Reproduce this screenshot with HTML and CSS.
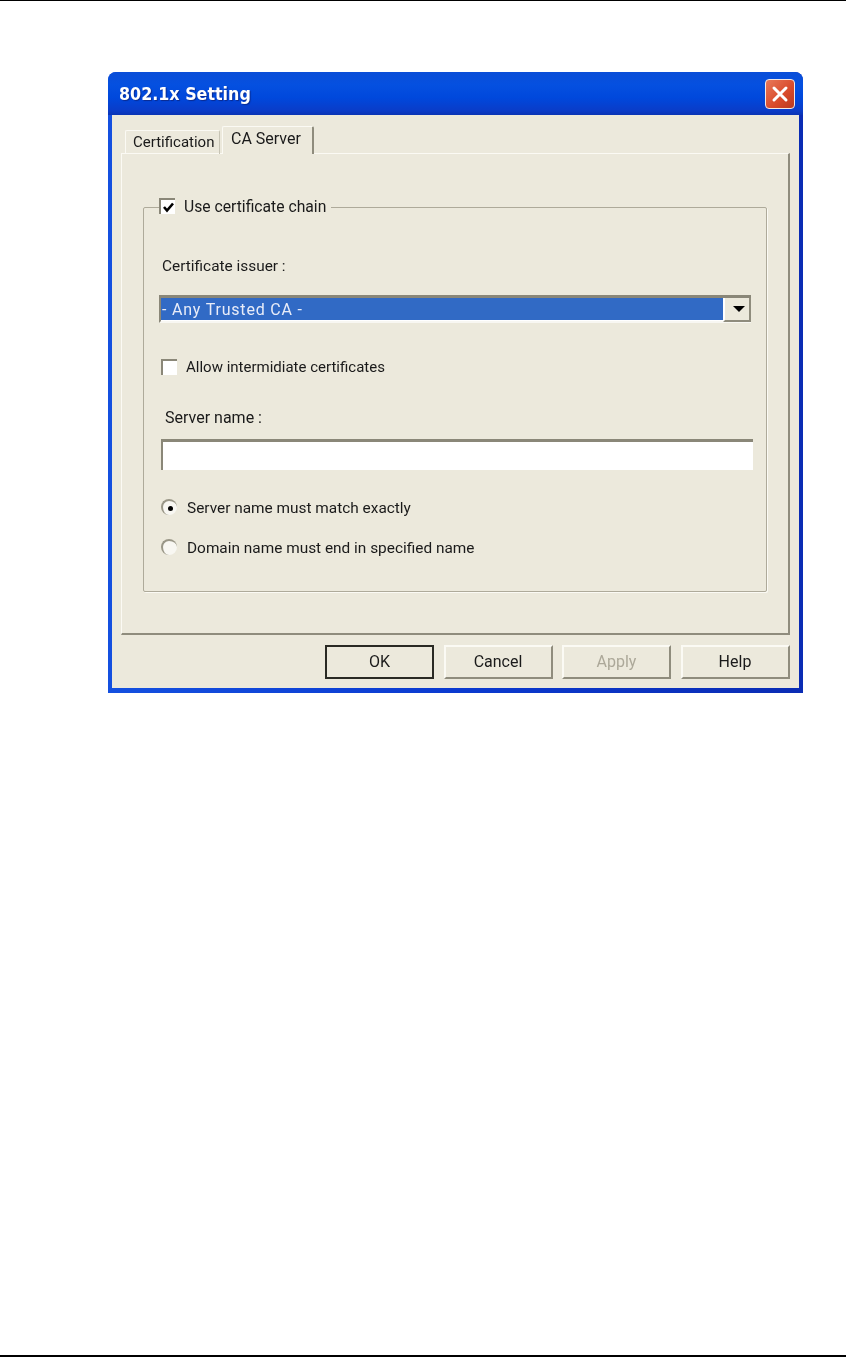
FILE: index.html
```html
<!DOCTYPE html>
<html lang="en">
<head>
    <meta charset="UTF-8">
    <meta name="viewport" content="width=device-width, initial-scale=1.0">
    <title>802.1x Setting</title>
    <link rel="stylesheet" href="styles.css">
</head>
<body>
    <div class="page">
        <div class="rule-top"></div>

        <div class="dialog">
            <div class="titlebar">
                <span class="title">802.1x Setting</span>
                <span class="close-btn">
                    <svg width="18" height="18" viewBox="0 0 18 18"><path d="M3 3 L15 15 M15 3 L3 15" stroke="#fff" stroke-width="3" stroke-linecap="round"/></svg>
                </span>
            </div>

            <div class="client">
                <div class="tabs">
                    <div class="tab">Certification</div>
                    <div class="tab tab-active">CA Server</div>
                </div>

                <div class="panel">
                    <fieldset class="group">
                        <legend class="group-legend">
                            <span class="check">
                                <svg width="13" height="13" viewBox="0 0 13 13"><path d="M2 6 L5 9.5 L11 2.5" fill="none" stroke="#000" stroke-width="2.6"/></svg>
                            </span>
                            Use certificate chain
                        </legend>

                        <div class="label label-issuer">Certificate issuer :</div>
                        <div class="combo">
                            <div class="combo-value">- Any Trusted CA -</div>
                            <div class="combo-arrow"><span class="arrow-down"></span></div>
                        </div>

                        <div class="option option-allow">
                            <span class="check"></span>
                            Allow intermidiate certificates
                        </div>

                        <div class="label label-server">Server name :</div>
                        <div class="textbox"></div>

                        <div class="option option-exact">
                            <span class="radio"><span class="radio-dot"></span></span>
                            Server name must match exactly
                        </div>
                        <div class="option option-domain">
                            <span class="radio"></span>
                            Domain name must end in specified name
                        </div>
                    </fieldset>
                </div>

                <div class="buttons">
                    <div class="btn btn-default">OK</div>
                    <div class="btn">Cancel</div>
                    <div class="btn btn-disabled">Apply</div>
                    <div class="btn">Help</div>
                </div>
            </div>
        </div>

        <div class="rule-bottom"></div>
    </div>
</body>
</html>
```

FILE: styles.css
```css
:root {
    --face: #ece9dc;
    --shadow: #8f8c7d;
    --light: #fbfaf4;
}
* {
    box-sizing: border-box;
}
body {
    margin: 0;
    background-color: white;
    color: #1a1a1a;
    font-family: Roboto, 'Liberation Sans', sans-serif;
    font-size: 15.4px;
}
.page {
    height: 1358px;
    display: flex;
    flex-direction: column;
    overflow: hidden;
}
.rule-top {
    height: 1px;
    background-color: black;
}
.rule-bottom {
    height: 2px;
    margin-top: auto;
    margin-bottom: 1px;
    background-color: black;
}
.dialog {
    width: 695px;
    height: 621px;
    margin: 71px 0 0 108px;
    display: flex;
    flex-direction: column;
    padding: 0 4px 5px;
    border-radius: 8px 8px 0 0;
    background: linear-gradient(90deg, #1450e0, #0b3ad0 50%, #0a2cb4);
    filter: blur(0.35px);
}
.titlebar {
    height: 43px;
    margin: 0 -4px;
    padding: 0 8px 0 11px;
    display: flex;
    align-items: center;
    justify-content: space-between;
    border-radius: 8px 8px 0 0;
    background: linear-gradient(180deg, #0a4ed8 0%, #0550e0 30%, #0048dc 60%, #0a3cc8 90%, #0a34b4 100%);
}
.title {
    color: white;
    font-family: 'DejaVu Sans Condensed', 'DejaVu Sans', sans-serif;
    font-weight: bold;
    font-size: 17.7px;
    text-shadow: 1px 1px 1px #0a2a90;
}
.close-btn {
    width: 30px;
    height: 30px;
    display: flex;
    align-items: center;
    justify-content: center;
    border: 1px solid #f4e8e4;
    border-radius: 4px;
    background: linear-gradient(135deg, #e8795a, #d8492a 60%, #b83a20);
}
.client {
    flex: 1;
    padding: 11px 9px 0;
    background-color: var(--face);
}
.tabs {
    display: flex;
    align-items: flex-end;
    padding-left: 4px;
    height: 28px;
    margin-bottom: -1px;
    position: relative;
    z-index: 1;
}
.tab {
    width: 95px;
    height: 24px;
    padding-left: 7px;
    font-size: 15px;
    line-height: 23px;
    border-top: 1px solid var(--light);
    border-left: 1px solid var(--light);
    border-right: 1px solid #c6c3b4;
    border-radius: 2px 2px 0 0;
}
.tab-active {
    width: 92px;
    height: 28px;
    margin-left: 2px;
    padding-left: 8px;
    font-size: 16px;
    line-height: 24px;
    border-right: 2px solid var(--shadow);
    background-color: var(--face);
}
.panel {
    height: 482px;
    padding: 44px 21px 0;
    border-top: 1px solid var(--light);
    border-left: 1px solid var(--light);
    border-right: 2px solid var(--shadow);
    border-bottom: 2px solid var(--shadow);
}
.group {
    height: 394px;
    margin: 0;
    padding: 0 15px;
    border: 1px solid #aeaa9a;
    border-radius: 2px;
    box-shadow: 1px 1px 0 var(--light);
}
.group-legend {
    margin-left: 0;
    padding: 0 5px 0 0;
    height: 18px;
    line-height: 18px;
    display: flex;
    align-items: center;
    gap: 9px;
    font-size: 15.7px;
}
.group-legend .check {
    margin-top: -2px;
}
.check {
    width: 16px;
    height: 16px;
    flex: none;
    display: flex;
    align-items: center;
    justify-content: center;
    border-top: 2px solid #8a8778;
    border-left: 2px solid #8a8778;
    background-color: white;
}
.label {
    line-height: 18px;
}
.label-issuer {
    margin: 41px 0 0 3px;
}
.label-server {
    margin: 33px 0 0 6px;
    font-size: 16px;
}
.combo {
    height: 28px;
    margin-top: 20px;
    display: flex;
    border-top: 3px solid #8a8778;
    border-left: 2px solid #8a8778;
    border-bottom: 2px solid #f8f7f2;
    background-color: white;
}
.combo-value {
    flex: 1;
    height: 22px;
    padding-left: 1px;
    font-size: 16px;
    letter-spacing: 0.8px;
    line-height: 24px;
    color: #e8ecf8;
    background-color: #316ac5;
}
.combo-arrow {
    width: 28px;
    height: 24px;
    margin-bottom: -2px;
    padding-left: 4px;
    display: flex;
    align-items: center;
    justify-content: center;
    background-color: var(--face);
    border-left: 2px solid white;
    border-right: 2px solid var(--shadow);
    border-bottom: 2px solid var(--shadow);
}
.arrow-down {
    width: 0;
    height: 0;
    border-left: 6px solid transparent;
    border-right: 6px solid transparent;
    border-top: 6px solid black;
}
.option {
    height: 18px;
    margin-left: 2px;
    display: flex;
    align-items: center;
    gap: 9px;
    line-height: 18px;
}
.option-allow {
    margin-top: 35px;
    font-size: 15px;
}
.option-exact {
    margin-top: 29px;
    gap: 10px;
}
.option-domain {
    margin-top: 22px;
    gap: 10px;
}
.textbox {
    height: 31px;
    margin: 12px -2px 0 2px;
    border-top: 3px solid #8a8778;
    border-left: 2px solid #8a8778;
    background-color: white;
}
.radio {
    width: 16px;
    height: 16px;
    margin-top: -2px;
    flex: none;
    display: flex;
    align-items: center;
    justify-content: center;
    border-radius: 50%;
    border-top: 2px solid #9a9788;
    border-left: 2px solid #9a9788;
    background-color: #f8f7f2;
}
.radio-dot {
    width: 5px;
    height: 5px;
    border-radius: 50%;
    background-color: black;
}
.buttons {
    margin-top: 10px;
    padding-left: 204px;
    display: flex;
    gap: 9.5px;
}
.btn {
    width: 109px;
    height: 34px;
    font-size: 16px;
    line-height: 30px;
    text-align: center;
    border-top: 2px solid var(--light);
    border-left: 2px solid var(--light);
    border-right: 2px solid var(--shadow);
    border-bottom: 2px solid var(--shadow);
}
.btn-default {
    border: 2px solid #2a2a24;
}
.btn-disabled {
    color: #aca899;
}
```
